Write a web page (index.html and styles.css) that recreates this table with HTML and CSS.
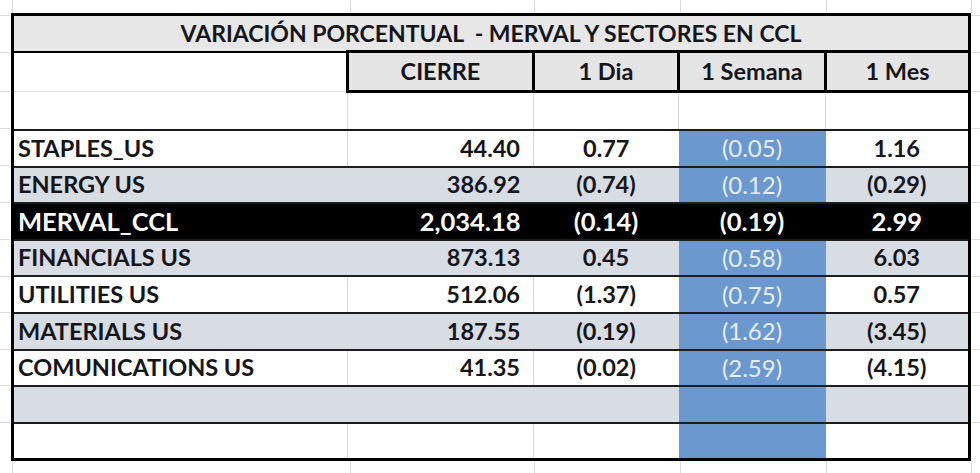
FILE: index.html
```html
<!DOCTYPE html>
<html lang="es">
<head>
<meta charset="utf-8">
<title>Variación porcentual - Merval y sectores en CCL</title>
<link rel="stylesheet" href="styles.css">
</head>
<body>
<div class="sheet">
  <table class="grid">
    <colgroup>
      <col class="c-label">
      <col class="c-cierre">
      <col class="c-dia">
      <col class="c-semana">
      <col class="c-mes">
    </colgroup>
    <tr class="r-title">
      <th colspan="5">VARIACIÓN PORCENTUAL&nbsp; - MERVAL Y SECTORES EN CCL</th>
    </tr>
    <tr class="r-head">
      <th class="blank"></th>
      <th>CIERRE</th>
      <th>1 Dia</th>
      <th>1 Semana</th>
      <th>1 Mes</th>
    </tr>
    <tr class="r-empty">
      <td></td><td></td><td></td><td></td><td></td>
    </tr>
    <tr class="white">
      <td class="lbl">STAPLES_US</td><td class="num">44.40</td><td>0.77</td><td class="sem">(0.05)</td><td>1.16</td>
    </tr>
    <tr class="gray">
      <td class="lbl">ENERGY US</td><td class="num">386.92</td><td>(0.74)</td><td class="sem">(0.12)</td><td>(0.29)</td>
    </tr>
    <tr class="black">
      <td class="lbl">MERVAL_CCL</td><td class="num">2,034.18</td><td>(0.14)</td><td class="sem">(0.19)</td><td>2.99</td>
    </tr>
    <tr class="gray">
      <td class="lbl">FINANCIALS US</td><td class="num">873.13</td><td>0.45</td><td class="sem">(0.58)</td><td>6.03</td>
    </tr>
    <tr class="white">
      <td class="lbl">UTILITIES US</td><td class="num">512.06</td><td>(1.37)</td><td class="sem">(0.75)</td><td>0.57</td>
    </tr>
    <tr class="gray">
      <td class="lbl">MATERIALS US</td><td class="num">187.55</td><td>(0.19)</td><td class="sem">(1.62)</td><td>(3.45)</td>
    </tr>
    <tr class="white">
      <td class="lbl">COMUNICATIONS US</td><td class="num">41.35</td><td>(0.02)</td><td class="sem">(2.59)</td><td>(4.15)</td>
    </tr>
    <tr class="gray">
      <td></td><td></td><td></td><td class="sem"></td><td></td>
    </tr>
    <tr class="white last">
      <td></td><td></td><td></td><td class="sem"></td><td></td>
    </tr>
  </table>
</div>
</body>
</html>
```

FILE: styles.css
```css
html, body {
  margin: 0;
  padding: 0;
  background: #ffffff;
}

.sheet {
  width: 980px;
  height: 473px;
  padding: 13px 0 0 11px;
  box-sizing: border-box;
  background:
    linear-gradient(#dcdcdc, #dcdcdc) 0 15px / 10px 1px no-repeat,
    linear-gradient(#dcdcdc, #dcdcdc) 0 52px / 10px 1px no-repeat,
    linear-gradient(#dcdcdc, #dcdcdc) 0 91px / 10px 1px no-repeat,
    linear-gradient(#dcdcdc, #dcdcdc) 0 128px / 10px 1px no-repeat,
    linear-gradient(#dcdcdc, #dcdcdc) 0 165px / 10px 1px no-repeat,
    linear-gradient(#dcdcdc, #dcdcdc) 0 202px / 10px 1px no-repeat,
    linear-gradient(#dcdcdc, #dcdcdc) 0 239px / 10px 1px no-repeat,
    linear-gradient(#dcdcdc, #dcdcdc) 0 276px / 10px 1px no-repeat,
    linear-gradient(#dcdcdc, #dcdcdc) 0 312px / 10px 1px no-repeat,
    linear-gradient(#dcdcdc, #dcdcdc) 0 349px / 10px 1px no-repeat,
    linear-gradient(#dcdcdc, #dcdcdc) 0 385px / 10px 1px no-repeat,
    linear-gradient(#dcdcdc, #dcdcdc) 0 422px / 10px 1px no-repeat,
    linear-gradient(#dcdcdc, #dcdcdc) 971px 15px / 9px 1px no-repeat,
    linear-gradient(#dcdcdc, #dcdcdc) 971px 52px / 9px 1px no-repeat,
    linear-gradient(#dcdcdc, #dcdcdc) 971px 91px / 9px 1px no-repeat,
    linear-gradient(#dcdcdc, #dcdcdc) 971px 128px / 9px 1px no-repeat,
    linear-gradient(#dcdcdc, #dcdcdc) 971px 165px / 9px 1px no-repeat,
    linear-gradient(#dcdcdc, #dcdcdc) 971px 202px / 9px 1px no-repeat,
    linear-gradient(#dcdcdc, #dcdcdc) 971px 239px / 9px 1px no-repeat,
    linear-gradient(#dcdcdc, #dcdcdc) 971px 276px / 9px 1px no-repeat,
    linear-gradient(#dcdcdc, #dcdcdc) 971px 312px / 9px 1px no-repeat,
    linear-gradient(#dcdcdc, #dcdcdc) 971px 349px / 9px 1px no-repeat,
    linear-gradient(#dcdcdc, #dcdcdc) 971px 385px / 9px 1px no-repeat,
    linear-gradient(#dcdcdc, #dcdcdc) 971px 422px / 9px 1px no-repeat,
    linear-gradient(#dcdcdc, #dcdcdc) 971px 0 / 1px 13px no-repeat,
    linear-gradient(#dcdcdc, #dcdcdc) 350px 0 / 1px 13px no-repeat,
    linear-gradient(#dcdcdc, #dcdcdc) 534px 0 / 1px 13px no-repeat,
    linear-gradient(#dcdcdc, #dcdcdc) 680px 0 / 1px 13px no-repeat,
    linear-gradient(#dcdcdc, #dcdcdc) 826px 0 / 1px 13px no-repeat,
    linear-gradient(#dcdcdc, #dcdcdc) 12px 0 / 1px 13px no-repeat,
    linear-gradient(#dcdcdc, #dcdcdc) 12px 461px / 1px 12px no-repeat,
    linear-gradient(#dcdcdc, #dcdcdc) 350px 461px / 1px 12px no-repeat,
    linear-gradient(#dcdcdc, #dcdcdc) 534px 461px / 1px 12px no-repeat,
    linear-gradient(#dcdcdc, #dcdcdc) 680px 461px / 1px 12px no-repeat,
    linear-gradient(#dcdcdc, #dcdcdc) 826px 461px / 1px 12px no-repeat,
    linear-gradient(#dcdcdc, #dcdcdc) 971px 461px / 1px 12px no-repeat,
    #ffffff;
}

.grid {
  width: 957px;
  table-layout: fixed;
  border-collapse: collapse;
  border: 3px solid #000;
  font-family: Lato, "Open Sans", "Liberation Sans", sans-serif;
  font-weight: 700;
  font-size: 23.5px;
  color: #15151c;
}

.c-label  { width: 335px; }
.c-cierre { width: 186px; }
.c-dia    { width: 145px; }
.c-semana { width: 147px; }
.c-mes    { width: 144px; }

.grid th,
.grid td {
  padding: 0;
  text-align: center;
  vertical-align: middle;
  white-space: nowrap;
  line-height: 1;
}

/* Title row */
.r-title th {
  height: 33px;
  background: #e7e7e7;
  border-bottom: 2px solid #000;
  font-weight: 700;
  font-size: 23px;
  padding-top: 1px;
}

/* Header row */
.r-head th {
  height: 36px;
  background: #e5e5e5;
  border: 3px solid #000;
  font-weight: 700;
  font-size: 23.5px;
  padding-top: 1px;
}
.r-head th.blank {
  background: #ffffff;
  border: 0;
  border-bottom: 1px solid #e2e2e2;
}

/* Blank row after the header */
.r-empty td {
  height: 36px;
  background: #fff;
  border-left: 1px solid #dadada;
  border-bottom: 2px solid #1a1a1a;
}
.r-empty td:first-child { border-left: 0; }

/* Data rows */
.white td,
.gray td,
.black td {
  height: 34.6px;
  border-bottom: 2px solid #1e1e1e;
}
.white td {
  background: #ffffff;
  border-left: 1px solid #d9d9d9;
}
.white td:first-child { border-left: 0; }
.gray td { background: #d8dce3; }
.black td {
  background: #000;
  color: #ffffff;
  font-size: 25.5px;
}
.last td { border-bottom: 0; }

.lbl {
  text-align: left !important;
  padding-left: 4px !important;
}
.num {
  text-align: right !important;
  padding-right: 13px !important;
}

.white td.sem,
.gray td.sem {
  background: #6a98cf;
  color: #e8eef7;
  font-weight: 400;
  font-size: 24px;
  border-left: 0;
}
.white td.sem + td { border-left: 0; }
```
